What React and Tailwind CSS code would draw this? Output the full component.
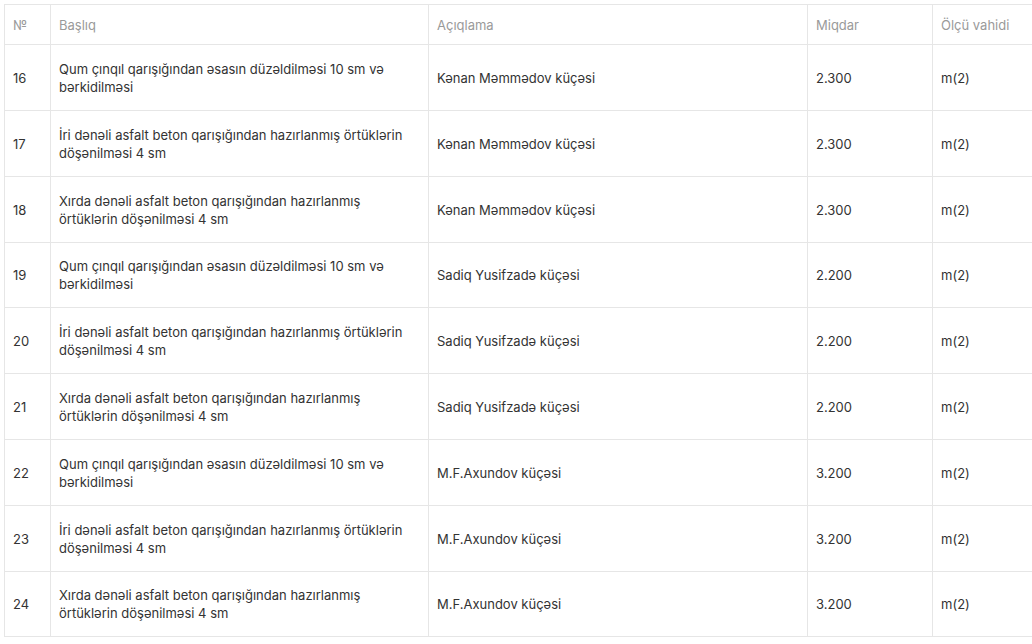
import React from "react";

const T1 = "Qum çınqıl qarışığından əsasın düzəldilməsi 10 sm və bərkidilməsi";
const T2 = "İri dənəli asfalt beton qarışığından hazırlanmış örtüklərin döşənilməsi 4 sm";
const T3 = "Xırda dənəli asfalt beton qarışığından hazırlanmış örtüklərin döşənilməsi 4 sm";

const rows = [
  ["16", T1, "Kənan Məmmədov küçəsi", "2.300", "h-[66px]"],
  ["17", T2, "Kənan Məmmədov küçəsi", "2.300", "h-[66px]"],
  ["18", T3, "Kənan Məmmədov küçəsi", "2.300", "h-[66px]"],
  ["19", T1, "Sadiq Yusifzadə küçəsi", "2.200", "h-[65px]"],
  ["20", T2, "Sadiq Yusifzadə küçəsi", "2.200", "h-[66px]"],
  ["21", T3, "Sadiq Yusifzadə küçəsi", "2.200", "h-[66px]"],
  ["22", T1, "M.F.Axundov küçəsi", "3.200", "h-[66px]"],
  ["23", T2, "M.F.Axundov küçəsi", "3.200", "h-[66px]"],
  ["24", T3, "M.F.Axundov küçəsi", "3.200", "h-[65px]"],
];

export default function App() {
  return (
    <div className="w-[1032px] h-[644px] overflow-hidden bg-white pt-[4px] pl-[4px]" style={{ fontFamily: "Inter, 'Noto Sans', sans-serif" }}>
      <table className="w-[1100px] table-fixed border-collapse text-[13px] leading-[18px]">
        <colgroup>
          <col className="w-[46px]" />
          <col className="w-[378px]" />
          <col className="w-[379px]" />
          <col className="w-[125px]" />
          <col />
        </colgroup>
        <thead>
          <tr className="h-[40px]">
            {["№", "Başlıq", "Açıqlama", "Miqdar", "Ölçü vahidi"].map((h) => (
              <th key={h} className="border border-[#e6e6e6] px-[8px] text-left font-normal text-[#9a9a9a] align-middle">
                {h}
              </th>
            ))}
          </tr>
        </thead>
        <tbody>
          {rows.map((r) => (
            <tr key={r[0]} className={r[4]}>
              <td className="border border-[#e6e6e6] px-[8px] text-[#333] align-middle">{r[0]}</td>
              <td className="border border-[#e6e6e6] px-[8px] text-[#333] align-middle">{r[1]}</td>
              <td className="border border-[#e6e6e6] px-[8px] text-[#333] align-middle">{r[2]}</td>
              <td className="border border-[#e6e6e6] px-[8px] text-[#333] align-middle">{r[3]}</td>
              <td className="border border-[#e6e6e6] px-[8px] text-[#333] align-middle">m(2)</td>
            </tr>
          ))}
        </tbody>
      </table>
    </div>
  );
}
